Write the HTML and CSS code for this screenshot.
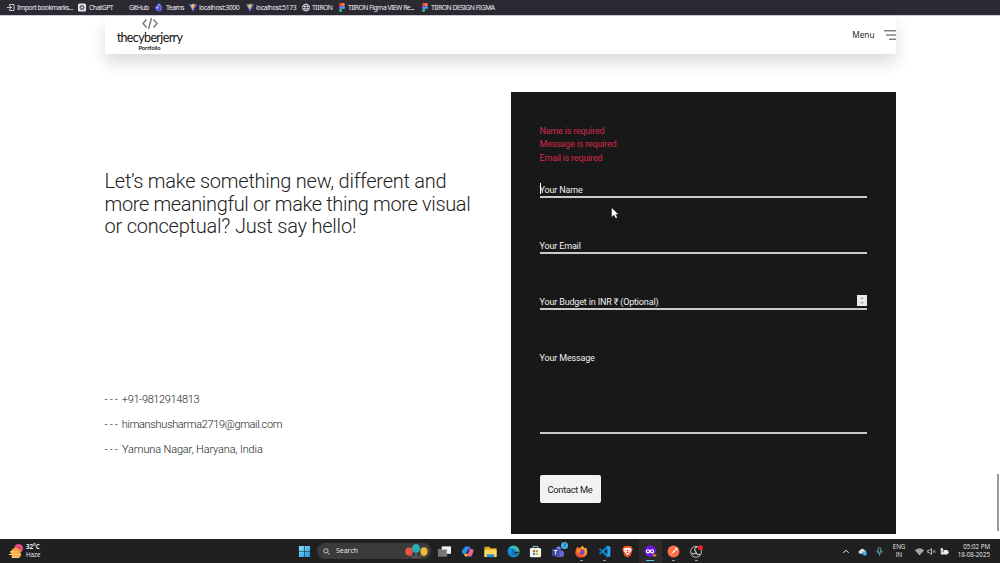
FILE: index.html
```html
<!DOCTYPE html>
<html lang="en">
<head>
  <meta charset="UTF-8">
  <meta name="viewport" content="width=device-width, initial-scale=1.0">
  <title>thecyberjerry | Portfolio</title>
  <link rel="stylesheet" href="styles.css">
</head>
<body>
  <svg class="defs" width="0" height="0">
    <defs>
      <linearGradient id="vite-grad" x1="0" y1="0" x2="1" y2="1">
        <stop offset="0" stop-color="#41b8ff"/><stop offset="1" stop-color="#bd34fe"/>
      </linearGradient>
      <linearGradient id="win-grad" x1="0" y1="0" x2="1" y2="1">
        <stop offset="0" stop-color="#8be3fb"/><stop offset="1" stop-color="#1795e0"/>
      </linearGradient>
      <linearGradient id="edge-grad" x1="0" y1="1" x2="1" y2="0">
        <stop offset="0" stop-color="#0a62b8"/><stop offset=".55" stop-color="#20aee0"/><stop offset="1" stop-color="#63d957"/>
      </linearGradient>
      <linearGradient id="fox-grad" x1="1" y1="0" x2="0" y2="1">
        <stop offset="0" stop-color="#ffd83a"/><stop offset=".5" stop-color="#ff7a20"/><stop offset="1" stop-color="#f0304f"/>
      </linearGradient>
      <symbol id="vite" viewBox="0 0 16 16">
        <path d="M0 1 8 16 16 1 8 3z" fill="url(#vite-grad)"/>
        <path d="M11 0 5 2v6l2-.5L6.500 12 11 5.500 9 6z" fill="#ffc928"/>
      </symbol>
      <symbol id="figma" viewBox="0 0 12 18">
        <path d="M6 0H3a3 3 0 0 0 0 6h3z" fill="#f24e1e"/>
        <path d="M6 0h3a3 3 0 0 1 0 6H6z" fill="#ff7262"/>
        <path d="M6 6H3a3 3 0 0 0 0 6h3z" fill="#a259ff"/>
        <circle cx="9" cy="9" r="3" fill="#1abcfe"/>
        <path d="M6 12H3a3 3 0 1 0 3 3z" fill="#0acf83"/>
      </symbol>
    </defs>
  </svg>

  <nav class="bookmarks">
    <span class="bookmark import"><svg viewBox="0 0 16 16" fill="none" stroke="#e8e6ea" stroke-width="1.700"><path d="M5 5V2h9v12H5v-3M0 8h9M6 5l3 3-3 3"/></svg>Import bookmarks...</span>
    <span class="bookmark chatgpt"><svg viewBox="0 0 16 16"><rect width="16" height="16" rx="3" fill="#e9e9e9"/><g fill="none" stroke="#555" stroke-width="1.200"><ellipse cx="8" cy="8" rx="5" ry="2.600"/><ellipse cx="8" cy="8" rx="5" ry="2.600" transform="rotate(60 8 8)"/><ellipse cx="8" cy="8" rx="5" ry="2.600" transform="rotate(120 8 8)"/></g></svg>ChatGPT</span>
    <span class="bookmark github"><svg viewBox="0 0 16 16"></svg>GitHub</span>
    <span class="bookmark teams"><svg viewBox="0 0 16 16"><circle cx="8" cy="3.500" r="3.500" fill="#7b83eb"/><path d="M2 5h12v5a6 6 0 0 1-12 0z" fill="#5b5fd7"/><rect y="5" width="9" height="9" rx="2" fill="#4046bd"/><path d="M2 7.500h5M4.500 7.500V12" stroke="#fff" stroke-width="1.500"/></svg>Teams</span>
    <span class="bookmark local"><svg><use href="#vite"/></svg>localhost:3000</span>
    <span class="bookmark local"><svg><use href="#vite"/></svg>localhost:5173</span>
    <span class="bookmark tiiron"><svg viewBox="0 0 16 16" fill="none" stroke="#e8e6ea" stroke-width="1.500"><circle cx="8" cy="8" r="7"/><ellipse cx="8" cy="8" rx="3" ry="7"/><path d="M1 6h14M1 10.500h14"/></svg>TIIRON</span>
    <span class="bookmark figma-view"><svg><use href="#figma"/></svg>TIIRON Figma VIEW Re...</span>
    <span class="bookmark figma-design"><svg><use href="#figma"/></svg>TIIRON DESIGN FIGMA</span>
  </nav>

  <div class="page">
    <header class="header">
      <div class="logo">
        <svg viewBox="0 0 16 12" fill="none" stroke="#777" stroke-width="1.400"><path d="M4.500 2 1 6l3.500 4M11.500 2 15 6l-3.500 4M9.500.5l-3 11"/></svg>
        <span class="logo-name">thecyberjerry</span>
        <span class="logo-sub">Portfolio</span>
      </div>
      <div class="menu">
        <span>Menu</span>
        <svg viewBox="0 0 12 10" stroke="#444" stroke-width="1"><path d="M0 .8h12M2 5h10M5 9.200h7"/></svg>
      </div>
    </header>

    <main class="contact">
      <section class="intro">
        <h1><span class="line-1">Let’s make something new, different and</span><br><span class="line-2">more meaningful or make thing more visual</span><br><span class="line-3">or conceptual? Just say hello!</span></h1>
        <ul>
          <li class="phone"><span class="dash">---</span> +91-9812914813</li>
          <li class="mail"><span class="dash">---</span> himanshusharma2719@gmail.com</li>
          <li class="place"><span class="dash">---</span> Yamuna Nagar, Haryana, India</li>
        </ul>
      </section>

      <form class="contact-form">
        <div class="errors">
          <p>Name is required</p>
          <p>Message is required</p>
          <p>Email is required</p>
        </div>
        <div class="field focused"><span>Your Name</span></div>
        <div class="field"><span>Your Email</span></div>
        <div class="field"><span>Your Budget in INR ₹ (Optional)</span>
          <svg class="spinner" viewBox="0 0 10 11"><rect width="10" height="11" fill="#e9e9e9"/><path d="M3 4l2-2 2 2zM3 7l2 2 2-2z" fill="#aaa"/></svg>
        </div>
        <div class="field message"><span>Your Message</span></div>
        <button type="button">Contact Me</button>
      </form>
    </main>
    <div class="scrollbar"></div>
    <svg class="cursor" viewBox="0 0 12 18"><path d="M1 1v14l3.500-3 2.500 5 2.500-1-2.500-5H11z" fill="#fff" stroke="#222" stroke-width=".4"/></svg>
  </div>

  <footer class="taskbar">
    <div class="weather">
      <svg viewBox="0 0 16 16"><circle cx="11" cy="5" r="5" fill="#e84e83"/><circle cx="11" cy="5" r="2" fill="#b33b70"/><path d="M2 10a6 6 0 0 1 11-3l1 6-3 3H4z" fill="#f9a13a"/><path d="M1 9h9M0 12h13M3 15h9" stroke="#ffd88b" stroke-width="1.300"/></svg>
      <p><b>32°C</b><br>Haze</p>
    </div>

    <div class="apps">
      <span class="app start"><svg viewBox="0 0 14 14"><path d="M1 1h5.700v5.700H1zM7.300 1H13v5.700H7.300zM1 7.300h5.700V13H1zM7.300 7.300H13V13H7.300z" fill="url(#win-grad)"/></svg></span>
      <div class="search">
        <svg class="lens" viewBox="0 0 12 12" fill="none" stroke="#ddd" stroke-width="1.500"><circle cx="5" cy="5" r="3.700"/><path d="M8 8l3.500 3.500"/></svg>
        <span>Search</span>
        <svg class="balloons" viewBox="0 0 24 14"><path d="M5 10 11 14M12 8v6M20 10l-7 4" stroke="#999" stroke-width=".6"/><ellipse cx="5" cy="7.500" rx="3.800" ry="4" fill="#e55545"/><path d="M4 11h3l-1 2z" fill="#c23d39"/><ellipse cx="12" cy="4.500" rx="4" ry="4.400" fill="#26aeb7"/><path d="M10.500 8h3L12 10z" fill="#188c98"/><ellipse cx="20" cy="7.500" rx="3.600" ry="4.200" fill="#efb63b"/><path d="M18.500 11h3L20 13z" fill="#c98e25"/></svg>
      </div>
      <span class="app"><svg viewBox="0 0 14 14"><rect x="4" y="1.500" width="10" height="8" fill="#f2f2f2"/><rect x=".5" y="5" width="9" height="7" fill="#777" stroke="#aaa" stroke-width=".5"/></svg></span>
      <span class="app"><svg viewBox="0 0 14 14"><path d="M4.500 1.500h4.800L6.500 9.500H2.700C.8 9.500.8 7.500 1.200 6z" fill="#2591ea"/><path d="M8 1.500c2 0 2 3 3 3h1.500c1.200 0 1 2 .5 3H8.500L7 4.500z" fill="#6c5ce5"/><path d="M9.500 4.500h3c1.200 0 .8 2.500.3 4l-1.300 3c-.5 1-1.300 1-2.500 1H5z" fill="#ef6295"/><path d="M1.500 9.500h5l1.500-2-1.800 5C4 13 3.500 11 3 9.500z" fill="#f0b33a"/><path d="M7.500 5h2L7.300 9.300h-2z" fill="#26222a"/></svg></span>
      <span class="app"><svg viewBox="0 0 14 14"><path d="M.5 2h5l1.500 1.500h6.500V12H.5z" fill="#e5a822"/><path d="M.5 5h13v8H.5z" fill="#ffd95a"/><path d="M3 10h8v3H3z" fill="#278bd4"/></svg></span>
      <span class="app"><svg viewBox="0 0 14 14"><circle cx="7" cy="7" r="6.500" fill="url(#edge-grad)"/><path d="M1 7c2-4 8-4 8 .2 0 1-1 1.300-.5 2 1 1 3.500.5 4.300-.7-1 3.500-7 4-8 .7C4.300 7.700 5 6.500 6 6 4 5 2 5.500 1 7z" fill="#126fb9"/><path d="M8.500 7.300c0 1-.7 1.600.5 1.900 2 .3 3.800-.5 4.200-1.900z" fill="#1e2020"/></svg></span>
      <span class="app"><svg viewBox="0 0 14 14"><path d="M4.500 4V1.500h5V4" fill="none" stroke="#9fd7ef"/><rect x="1" y="3.300" width="12" height="10" rx="1.500" fill="#f3f3f3"/><path d="M4.200 5.500h2.400v2.300H4.200z" fill="#ea4f35"/><path d="M7.300 5.500h2.400v2.300H7.300z" fill="#76b82a"/><path d="M4.200 8.500h2.400v2.300H4.200z" fill="#2b9be5"/><path d="M7.300 8.500h2.400v2.300H7.300z" fill="#f6b51e"/></svg></span>
      <span class="app"><svg viewBox="0 0 14 14"><circle cx="7" cy="4" r="2.500" fill="#7b83eb"/><rect x="3" y="6" width="10" height="7" rx="3" fill="#6268cf"/><rect x="0" y="4" width="8" height="8" rx="1" fill="#3f459f"/><path d="M2 6h4M4 6v4.500" stroke="#fff"/></svg><i class="badge">3</i></span>
      <span class="app running"><svg viewBox="0 0 14 14"><path d="M1 5l1.500-3 2 1.500L7 2l1-1.500 2 3L12 3c2 4 2 10-5 10.500C0 13.500-.5 8 1 5z" fill="url(#fox-grad)"/><circle cx="7.200" cy="7.500" r="3" fill="#7944c6"/><path d="M2 5c2-.7 4 .5 5 1.500C5 7 4.500 8 5.500 9 3 9 2 7 2 5z" fill="#ff8b27"/></svg></span>
      <span class="app running"><svg viewBox="0 0 14 14"><path d="M10 .8 13.300 2v10L10 13.300 3.500 7z" fill="#28a7ef"/><path d="M10 .8 .7 9.200 2 10.500 10 4.500zM10 13.200.7 4.800 2 3.500l8 6z" fill="#087bc6"/><path d="M10 4.300v5.400L6.500 7z" fill="#202224"/></svg></span>
      <span class="app"><svg viewBox="0 0 14 14"><path d="M4 1h6l1.500 1.200 1 2-2 7L7 13.500l-3.500-2.300-2-7 1-2z" fill="#f05428"/><path d="M3.500 3.500 7 3l3.500.5 1 2L9 9l-2 2-2-2-2.500-3.500z" fill="#fff"/><path d="M4 5.500l2 .8M10 5.500l-2 .8M7 5v2.500M5.500 8.500 7 7.800l1.500.7" stroke="#f05428" stroke-width=".9"/></svg></span>
      <span class="app active"><svg viewBox="0 0 14 14"><circle cx="6.700" cy="6.700" r="6.300" fill="#6c16dc"/><g fill="none" stroke="#fff" stroke-width="1.300"><circle cx="4.300" cy="6.800" r="1.700"/><circle cx="8.700" cy="6.800" r="1.700"/></g><circle cx="11.500" cy="10.500" r="2" fill="#e89a62"/><path d="M9.500 10a2 2 0 0 1 4 0l.5 2-1 .4-.5-2z" fill="#6d3320"/></svg></span>
      <span class="app running"><svg viewBox="0 0 14 14"><circle cx="7" cy="7" r="6.400" fill="#fa7047"/><path d="M3.500 10.500l4.700-5.300 1.300 1.200z" fill="#fff"/><circle cx="10" cy="4.300" r="1.300" fill="#fff"/></svg></span>
      <span class="app running"><svg viewBox="0 0 14 14" fill="none" stroke="#c9c9c9"><circle cx="6.500" cy="7.300" r="5.900"/><path d="M7.500 2.500C4.500 3 4.300 6 6.500 7.300M11 9.500C9.500 11.500 6.500 10 6.500 7.300M2 8.500c2 2 4.500 1 4.500-1.200" stroke-width="1.200"/><circle cx="11.300" cy="3" r="2.700" fill="#f5202b" stroke="none"/></svg></span>
    </div>

    <div class="tray">
      <svg class="chevron" viewBox="0 0 12 12" fill="none" stroke="#eee" stroke-width="1.500"><path d="M2 8l4-4 4 4"/></svg>
      <svg class="cloud" viewBox="0 0 12 12"><path d="M2.500 9a2.300 2.300 0 0 1 0-4.500 3.500 3.500 0 0 1 6.500-.2A2.500 2.500 0 0 1 9.500 9z" fill="#d5dce2"/><circle cx="9" cy="8.500" r="3" fill="#1697df"/><path d="M7.500 8h3M7.500 9.500h3" stroke="#fff" stroke-width=".6"/></svg>
      <svg class="mic" viewBox="0 0 12 12" fill="none" stroke="#76ced5"><rect x="4.200" y=".8" width="3.600" height="6.400" rx="1.800"/><path d="M2.500 5c0 5 7 5 7 0M6 9v2.500"/></svg>
      <p class="lang">ENG<br>IN</p>
      <svg class="wifi" viewBox="0 0 12 12"><path d="M0 4.500C3.500 1.300 8.500 1.300 12 4.500L6 11z" fill="#b9b9b9"/><path d="M1 6c3-2.600 7-2.600 10 0M3 8c2-1.600 4-1.600 6 0" fill="none" stroke="#444" stroke-width=".6"/></svg>
      <svg class="volume" viewBox="0 0 12 12" fill="none" stroke="#eee"><path d="M1 4.500h2L6 2v8L3 7.500H1zM8 4.500l3 3M11 4.500l-3 3"/></svg>
      <svg class="battery" viewBox="0 0 12 12"><rect x="1" y="4" width="9.500" height="6" rx="1" fill="#eee"/><path d="M10.500 6H12v2h-1.500z" fill="#eee"/><path d="M1 1.500h3v3H1z" fill="#eee"/><path d="M4.500 3v3.500H2" fill="none" stroke="#222" stroke-width=".7"/></svg>
      <p class="clock">05:02 PM<br>18-08-2025</p>
    </div>
  </footer>
</body>
</html>
```
FILE: styles.css
```css
* {
  box-sizing: border-box;
}

body {
  margin: 0;
  width: 1000px;
  height: 563px;
  display: flex;
  flex-direction: column;
  overflow: hidden;
  background: #fff;
  color: #222;
  font-family: Roboto, sans-serif;
}

p, h1, ul {
  margin: 0;
  padding: 0;
}

.defs {
  position: absolute;
}

/* Bookmarks */
.bookmarks {
  flex: 0 0 16px;
  display: grid;
  grid-template-columns: 71px 40px 37px 34px 57px 56px 36px 83px 100px;
  align-items: center;
  padding: 0 0 1px 7px;
  background: #2b2a33;
  border-bottom: 1px solid #cfcdd8;
  color: #f0eef2;
  font: 6.8px "Noto Sans", sans-serif;
}

.bookmark {
  display: flex;
  align-items: center;
  gap: 2px;
  white-space: nowrap;
  letter-spacing: -0.42px;
}

.bookmark svg {
  width: 8px;
  height: 9px;
  flex: none;
}

.import {
  letter-spacing: -0.5px;
}

.chatgpt, .github, .teams {
  gap: 3px;
  letter-spacing: -0.5px;
}

.figma-view {
  letter-spacing: -0.52px;
}

.figma-design {
  letter-spacing: -0.48px;
}

/* Header */
.page {
  position: relative;
  flex: 1;
  display: flex;
  flex-direction: column;
}

.header {
  width: 791px;
  height: 38px;
  margin-left: 104.5px;
  display: flex;
  justify-content: space-between;
  box-shadow: 0 9px 16px rgba(0, 0, 0, 0.14);
}

.logo {
  width: 90px;
  padding-top: 1px;
  display: flex;
  flex-direction: column;
  align-items: center;
}

.logo svg {
  width: 16px;
  height: 13px;
}

.logo-name {
  font: 12.5px/15px Lato, sans-serif;
  letter-spacing: -0.62px;
  color: #111;
}

.logo-sub {
  font: bold 5.7px/6px Lato, sans-serif;
  color: #111;
}

.menu {
  height: 37px;
  display: flex;
  align-items: center;
  gap: 9px;
  font: 8.3px "Open Sans", sans-serif;
}

.menu svg {
  width: 12px;
  height: 10px;
}

/* Contact section */
.contact {
  width: 791px;
  margin: 38px 0 0 104.5px;
  display: flex;
  justify-content: space-between;
}

.intro {
  padding-top: 78px;
}

.intro h1 {
  font-size: 20px;
  line-height: 22.7px;
  font-weight: 300;
  white-space: nowrap;
}

.line-1 {
  letter-spacing: -0.24px;
}

.line-2 {
  letter-spacing: -0.35px;
}

.line-3 {
  letter-spacing: -0.22px;
}

.intro ul {
  margin-top: 149px;
  list-style: none;
  font-size: 11px;
  line-height: 25px;
  font-weight: 300;
  white-space: nowrap;
}

.dash {
  display: inline-block;
  width: 15px;
  letter-spacing: 2px;
}

.phone {
  letter-spacing: -0.37px;
}

.mail {
  letter-spacing: -0.35px;
}

.place {
  letter-spacing: -0.15px;
}

.contact-form {
  width: 385px;
  height: 442px;
  padding: 32px 29px 0 29px;
  background: #181818;
  color: #f0f0f0;
  font-size: 9px;
}

.errors {
  height: 57px;
  padding-top: 0.6px;
  color: #d5294d;
  line-height: 13.7px;
  letter-spacing: -0.2px;
}

.field {
  position: relative;
  height: 17px;
  margin-bottom: 39px;
  display: flex;
  justify-content: space-between;
  border-bottom: 2px solid #c9cbca;
  line-height: 18px;
  letter-spacing: -0.16px;
}

.focused::before {
  content: "";
  position: absolute;
  left: 0;
  top: 2px;
  width: 1px;
  height: 11px;
  background: #fff;
}

.spinner {
  width: 10px;
  height: 11px;
  margin-top: 2px;
}

.message {
  height: 85px;
  margin-bottom: 41px;
}

.contact-form button {
  width: 61px;
  height: 28px;
  padding: 0;
  border: none;
  border-radius: 2px;
  background: #f2f2f2;
  color: #222;
  font: 9.3px Roboto, sans-serif;
  letter-spacing: -0.3px;
}

.scrollbar {
  position: absolute;
  right: 1px;
  top: 458px;
  width: 2px;
  height: 57px;
  background: #999;
}

.cursor {
  position: absolute;
  left: 611px;
  top: 191px;
  width: 8px;
  height: 12px;
}

/* Taskbar */
.taskbar {
  position: relative;
  flex: 0 0 24px;
  display: flex;
  align-items: center;
  background: #202020;
  color: #eee;
  font: 6.2px/8px "Open Sans", sans-serif;
}

.weather {
  width: 293px;
  padding-left: 9px;
  display: flex;
  align-items: center;
  gap: 3px;
}

.weather svg {
  width: 14px;
  height: 14px;
}

.apps {
  display: flex;
  align-items: center;
}

.app {
  position: relative;
  width: 22.9px;
  height: 24px;
  display: flex;
  align-items: center;
  justify-content: center;
}

.app svg {
  width: 13px;
  height: 13px;
}

.running::after, .active::after {
  content: "";
  position: absolute;
  bottom: 2px;
  width: 3px;
  height: 1px;
  background: #999;
}

.active {
  background: #2b2b2b;
}

.active::after {
  width: 8px;
  background: #59c5ed;
}

.badge {
  position: absolute;
  right: 2px;
  top: 3px;
  width: 7px;
  height: 7px;
  border-radius: 50%;
  background: #45b6ea;
  color: #123;
  font: 5px/7px "Open Sans", sans-serif;
  text-align: center;
}

.search {
  width: 114px;
  height: 16px;
  margin: 0 2px 0 1px;
  padding: 0 3px 0 6px;
  display: flex;
  align-items: center;
  border-radius: 8px;
  background: #3b3b3b;
  font-size: 7px;
}

.lens {
  width: 7px;
  height: 7px;
  margin-right: 6px;
}

.balloons {
  width: 24px;
  height: 14px;
  margin-left: auto;
}

.tray {
  margin-left: auto;
  padding-right: 10px;
  display: flex;
  align-items: center;
}

.tray svg {
  width: 9px;
  height: 9px;
}

.tray .chevron {
  width: 8px;
  margin-right: 8px;
}

.tray .cloud {
  margin-right: 8px;
}

.lang {
  width: 16px;
  margin: 0 8px 0 7px;
  text-align: center;
}

.volume {
  margin: 0 4px 0 3px;
}

.clock {
  width: 36px;
  margin-left: 5px;
  text-align: right;
  white-space: nowrap;
}
```
